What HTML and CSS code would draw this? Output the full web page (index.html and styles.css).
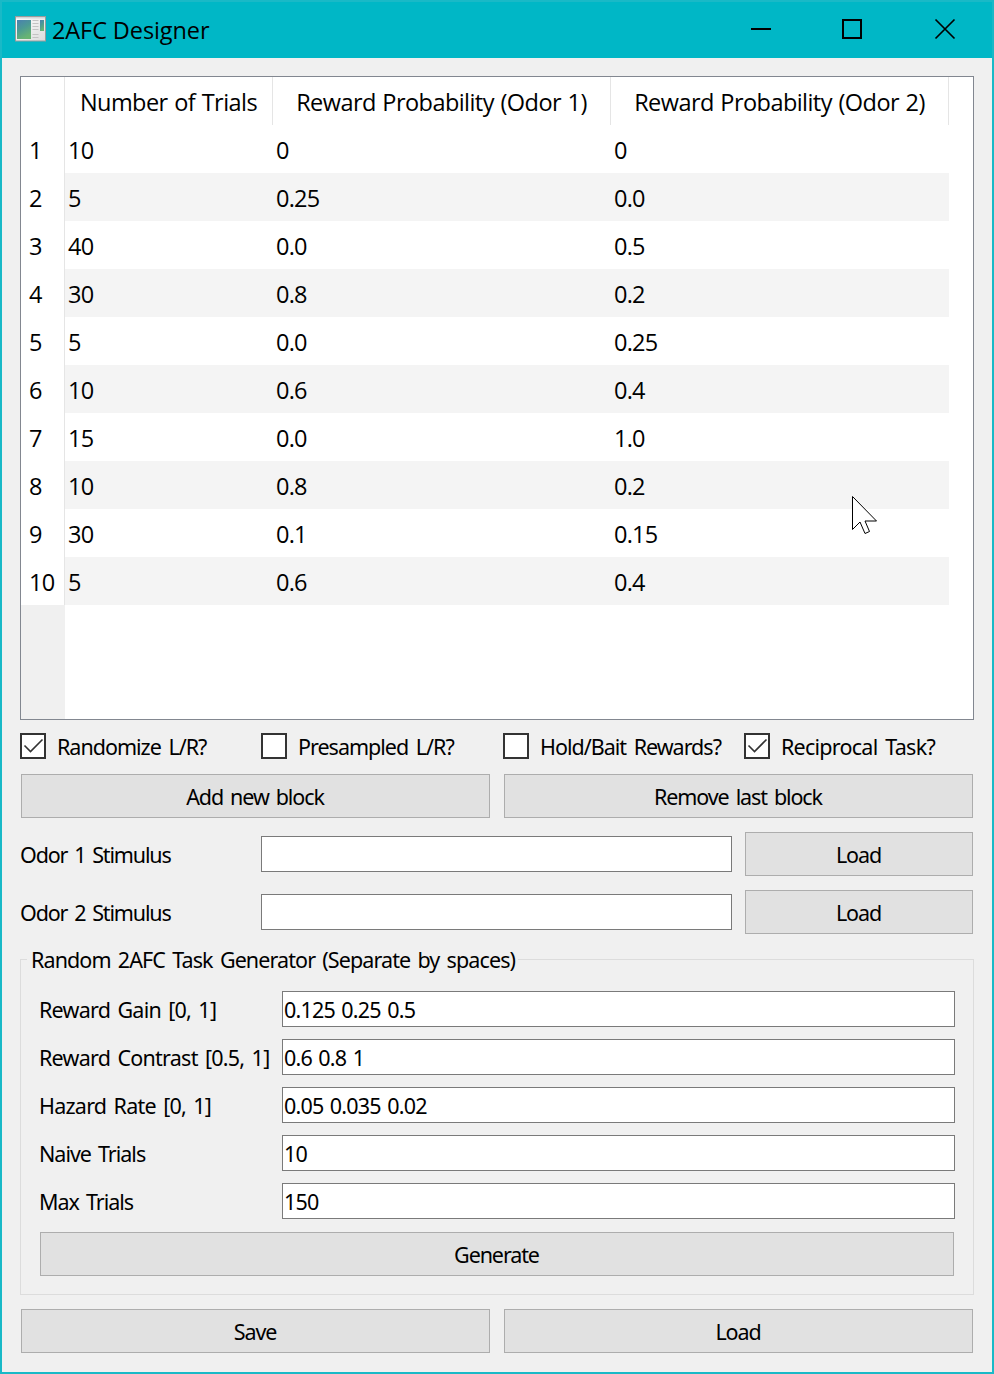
FILE: index.html
```
<!DOCTYPE html>
<html lang="en">
<head>
<meta charset="utf-8">
<title>2AFC Designer</title>
<link rel="stylesheet" href="styles.css">
</head>
<body>
<div class="window">
  <header class="titlebar">
    <svg class="app-icon" width="31" height="26" viewBox="0 0 31 26">
      <defs>
        <linearGradient id="pane" x1="0" y1="0" x2="0.4" y2="1"><stop offset="0" stop-color="#4a80b0"/><stop offset="0.5" stop-color="#4c9a94"/><stop offset="1" stop-color="#68b473"/></linearGradient>
        <linearGradient id="frame" x1="0" y1="0" x2="1" y2="1"><stop offset="0" stop-color="#fff"/><stop offset="1" stop-color="#dcdcdc"/></linearGradient>
      </defs>
      <rect x="0.5" y="0.5" width="30" height="24.500" fill="url(#frame)" stroke="#9b9b9b"/>
      <rect x="1" y="1" width="29" height="1.500" fill="#d2d5d8"/>
      <rect x="2" y="4" width="14" height="19" fill="url(#pane)"/>
      <path d="M17.500 4.500h6M17.500 7.500h6M17.500 10.500h6M17.500 13.500h6M17.500 18.500h6M17.500 21.500h6" stroke="#c3c3c3"/>
      <rect x="25" y="4" width="4" height="11" fill="url(#pane)"/>
    </svg>
    <span class="caption">2AFC Designer</span>
    <svg class="controls" width="206" height="22" viewBox="0 0 206 22" fill="none" stroke="#000" stroke-width="2">
      <path d="M1 11h20M93 2h18v18H93z"/><path d="M185.500 1.500l19 19M204.500 1.500l-19 19" stroke-width="1.700"/>
    </svg>
  </header>
  <main class="content">
    <div class="table">
      <div class="row head"><span></span><span>Number of Trials</span><span>Reward Probability (Odor 1)</span><span>Reward Probability (Odor 2)</span></div>
      <div class="row"><span>1</span><span>10</span><span>0</span><span>0</span></div>
      <div class="row"><span>2</span><span>5</span><span>0.25</span><span>0.0</span></div>
      <div class="row"><span>3</span><span>40</span><span>0.0</span><span>0.5</span></div>
      <div class="row"><span>4</span><span>30</span><span>0.8</span><span>0.2</span></div>
      <div class="row"><span>5</span><span>5</span><span>0.0</span><span>0.25</span></div>
      <div class="row"><span>6</span><span>10</span><span>0.6</span><span>0.4</span></div>
      <div class="row"><span>7</span><span>15</span><span>0.0</span><span>1.0</span></div>
      <div class="row"><span>8</span><span>10</span><span>0.8</span><span>0.2</span></div>
      <div class="row"><span>9</span><span>30</span><span>0.1</span><span>0.15</span></div>
      <div class="row"><span>10</span><span>5</span><span>0.6</span><span>0.4</span></div>
      <div class="gutter"></div>
    </div>
    <div class="grid checks">
      <label class="check"><svg class="box" width="26" height="26"><rect x="1" y="1" width="24" height="24"/><path d="M4.500 12.500l6 6L22.500 6.500"/></svg><span>Randomize L/R?</span></label>
      <label class="check"><svg class="box" width="26" height="26"><rect x="1" y="1" width="24" height="24"/></svg><span>Presampled L/R?</span></label>
      <label class="check"><svg class="box" width="26" height="26"><rect x="1" y="1" width="24" height="24"/></svg><span>Hold/Bait Rewards?</span></label>
      <label class="check"><svg class="box" width="26" height="26"><rect x="1" y="1" width="24" height="24"/><path d="M4.500 12.500l6 6L22.500 6.500"/></svg><span class="loose">Reciprocal Task?</span></label>
    </div>
    <div class="grid actions"><button class="btn wide">Add new block</button><button class="btn wide">Remove last block</button></div>
    <div class="grid stimulus"><span class="label">Odor 1 Stimulus</span><div class="field wide"></div><button class="btn">Load</button></div>
    <div class="grid stimulus"><span class="label">Odor 2 Stimulus</span><div class="field wide"></div><button class="btn">Load</button></div>
    <section class="group">
      <h2 class="legend">Random 2AFC Task Generator (Separate by spaces)</h2>
      <div class="form">
        <span class="label loose">Reward Gain [0, 1]</span><div class="field">0.125 0.25 0.5</div>
        <span class="label loose">Reward Contrast [0.5, 1]</span><div class="field">0.6 0.8 1</div>
        <span class="label loose">Hazard Rate [0, 1]</span><div class="field">0.05 0.035 0.02</div>
        <span class="label">Naive Trials</span><div class="field">10</div>
        <span class="label">Max Trials</span><div class="field">150</div>
      </div>
      <button class="btn generate">Generate</button>
    </section>
    <div class="grid footer"><button class="btn wide">Save</button><button class="btn wide">Load</button></div>
  </main>
  <svg class="cursor" width="26" height="40" viewBox="0 0 26 40" fill="#fff" stroke="#000"><path d="M.500.500v33l7.500-7.500 5 11.500 4.500-2-4.500-10.500h11.500z"/></svg>
</div>
</body>
</html>
```
FILE: styles.css
```
* { box-sizing: border-box; }
body { margin: 0; }
.window {
  position: relative;
  width: 994px;
  height: 1374px;
  border: 2px solid #19b9c7;
  background: #f0f0f0;
  color: #000;
  font: 21.5px/30px "Noto Sans", "Open Sans", sans-serif;
  letter-spacing: -1px;
  word-spacing: 3px;
  white-space: nowrap;
}
.titlebar {
  height: 56px;
  display: flex;
  align-items: center;
  padding: 0 36px 2px 13px;
  background: #00b7c6;
}
.caption {
  margin-left: 6px;
  padding-top: 2px;
  font: 23.5px/32px "Open Sans", "Noto Sans", sans-serif;
  letter-spacing: -0.1px;
  word-spacing: 0;
}
.controls { margin-left: auto; }
.content { padding: 18px 18px 0; }
.table {
  height: 644px;
  display: flex;
  flex-direction: column;
  border: 1px solid #828790;
  background: #fff;
  font: 23.5px/48px "Open Sans", "Noto Sans", sans-serif;
  letter-spacing: -0.8px;
  word-spacing: 0;
}
.row {
  width: 928px;
  height: 48px;
  display: grid;
  grid-template-columns: 44px 208px 338px 338px;
}
.row > span { padding-left: 3px; padding-top: 2px; height: 48px; line-height: 46px; }
.row > span:first-child { padding-left: 8px; border-right: 1px solid #e5e5e5; background: #fff; }
.row:nth-child(odd):not(.head) { background: #f4f4f4; }
.head > span { padding-left: 0; text-align: center; border-right: 1px solid #e5e5e5; letter-spacing: -0.55px; word-spacing: 1px; }
.gutter { flex: 1; width: 44px; background: #f0f0f0; }
.grid {
  display: grid;
  grid-template-columns: 229px 230px 229px 230px;
  column-gap: 12px;
  align-items: center;
}
.wide { grid-column: span 2; }
.checks { height: 26px; margin-top: 13px; }
.check { height: 26px; display: flex; align-items: center; gap: 11px; }
.box { fill: #fff; stroke: #333; stroke-width: 2; flex: none; }
.box path { fill: none; stroke-width: 1.6; }
.check span { padding-top: 2px; }
.btn {
  height: 44px;
  margin: 0 1px;
  padding: 2px 1px 0 0;
  border: 1px solid #adadad;
  border-radius: 0;
  background: #e1e1e1;
  color: #000;
  font: inherit;
  letter-spacing: -1.1px;
  word-spacing: 2.5px;
}
.actions { margin-top: 15px; }
.stimulus { margin-top: 14px; }
.label { padding-top: 1px; word-spacing: 2.4px; }
.stimulus .label { letter-spacing: -1.15px; }
.loose { letter-spacing: -0.75px; }
.field {
  height: 36px;
  padding: 3px 0 0 1px;
  border: 1px solid #7a7a7a;
  background: #fff;
  letter-spacing: -0.8px;
  word-spacing: 1.6px;
}
.group {
  height: 336px;
  margin-top: 25px;
  padding: 0 18px;
  border: 1px solid #dcdcdc;
}
.legend {
  width: max-content;
  height: 30px;
  margin: -15px 0 0 -12px;
  padding: 0 3px 0 4px;
  background: #f0f0f0;
  font: inherit;
  letter-spacing: -0.9px;
  word-spacing: 2.5px;
}
.form {
  display: grid;
  grid-template-columns: 243px 673px;
  row-gap: 12px;
  align-items: center;
  margin-top: 16px;
}
.generate { width: 914px; display: block; margin-top: 13px; }
.footer { margin-top: 14px; }
.cursor { position: absolute; left: 850px; top: 494px; }
```
